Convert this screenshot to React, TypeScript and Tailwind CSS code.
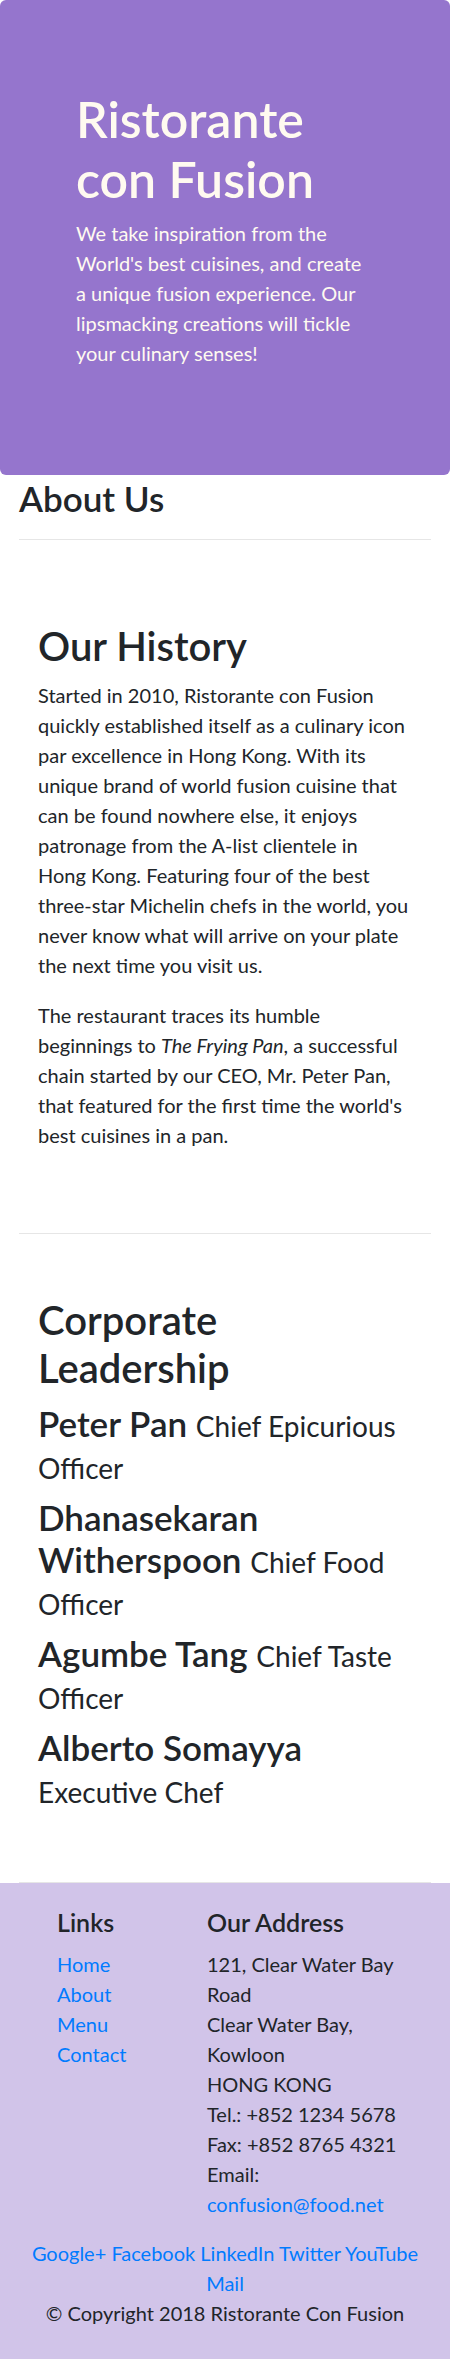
const leaders = [
  { name: "Peter Pan", designation: "Chief Epicurious Officer" },
  { name: "Dhanasekaran Witherspoon", designation: "Chief Food Officer" },
  { name: "Agumbe Tang", designation: "Chief Taste Officer" },
  { name: "Alberto Somayya", designation: "Executive Chef" },
];

const socials = ["Google+", "Facebook", "LinkedIn", "Twitter", "YouTube", "Mail"];

function Jumbotron() {
  return (
    <header className="bg-[#9575cd] rounded-[6px] pt-[89px] pb-[107px] px-[76px] text-[#fffaf0]">
      <h1 className="text-[50px] leading-[60px] font-semibold mb-[9px]">Ristorante con Fusion</h1>
      <p className="text-[20px] leading-[30px]">
        We take inspiration from the World's best cuisines, and create a unique fusion experience. Our
        lipsmacking creations will tickle your culinary senses!
      </p>
    </header>
  );
}

function Divider() {
  return <div className="h-px bg-[#e6e6e6]" />;
}

function Footer() {
  return (
    <footer className="bg-[#d1c4e9] pt-[24px] pb-[31px] text-[20px] leading-[30px]">
      <div className="flex">
        <div className="ml-[57px] w-[150px]">
          <h5 className="text-[25px] leading-[30px] font-semibold mb-[12px]">Links</h5>
          <ul className="flex flex-col">
            <li><a href="#" className="text-[#007bff]">Home</a></li>
            <li><a href="#" className="text-[#007bff]">About</a></li>
            <li><a href="#" className="text-[#007bff]">Menu</a></li>
            <li><a href="#" className="text-[#007bff]">Contact</a></li>
          </ul>
        </div>
        <div className="w-[200px]">
          <h5 className="text-[25px] leading-[30px] font-semibold mb-[12px]">Our Address</h5>
          <address className="not-italic">
            121, Clear Water Bay Road<br />
            Clear Water Bay, Kowloon<br />
            HONG KONG<br />
            Tel.: +852 1234 5678<br />
            Fax: +852 8765 4321<br />
            Email: <a href="#" className="text-[#007bff]">confusion@food.net</a>
          </address>
        </div>
      </div>
      <div className="mt-[19px] px-[19px] text-center">
        {socials.map((s, i) => (
          <span key={s}>
            <a href="#" className="text-[#007bff]">{s}</a>
            {i < socials.length - 1 ? " " : ""}
          </span>
        ))}
      </div>
      <p className="text-center">© Copyright 2018 Ristorante Con Fusion</p>
    </footer>
  );
}

export default function App() {
  return (
    <div className="font-['Lato',sans-serif] text-[#212529] bg-white">
      <Jumbotron />
      <main className="px-[19px]">
        <h3 className="text-[35px] leading-[42px] font-semibold pt-[2px] mb-[20px]">About Us</h3>
        <Divider />

        <section className="pl-[19px] pr-[15px] pt-[82px] pb-[63px] text-[20px] leading-[30px]">
          <h2 className="text-[40px] leading-[48px] font-semibold mb-[10px]">Our History</h2>
          <p className="mb-[20px]">
            Started in 2010, Ristorante con Fusion quickly established itself as a culinary icon par
            excellence in Hong Kong. With its unique brand of world fusion cuisine that can be found
            nowhere else, it enjoys patronage from the A-list clientele in
            <br />
            Hong Kong. Featuring four of the best three-star Michelin chefs in the world, you never know
            what will arrive on your plate the next time you visit us.
          </p>
          <p className="mb-[20px]">
            The restaurant traces its humble beginnings to <em>The Frying Pan</em>, a successful chain
            started by our CEO, Mr. Peter Pan, that featured for the first time the world's best
            cuisines in a pan.
          </p>
        </section>
        <Divider />

        <section className="px-[19px] pt-[62px] pb-[62px]">
          <h2 className="text-[40px] leading-[48px] font-semibold mb-[10px]">Corporate Leadership</h2>
          {leaders.map((l) => (
            <h3 key={l.name} className="text-[35px] leading-[42px] font-semibold mb-[10px]">
              {l.name} <small className="text-[28px] leading-none font-normal">{l.designation}</small>
            </h3>
          ))}
        </section>
        <Divider />
      </main>
      <Footer />
    </div>
  );
}
